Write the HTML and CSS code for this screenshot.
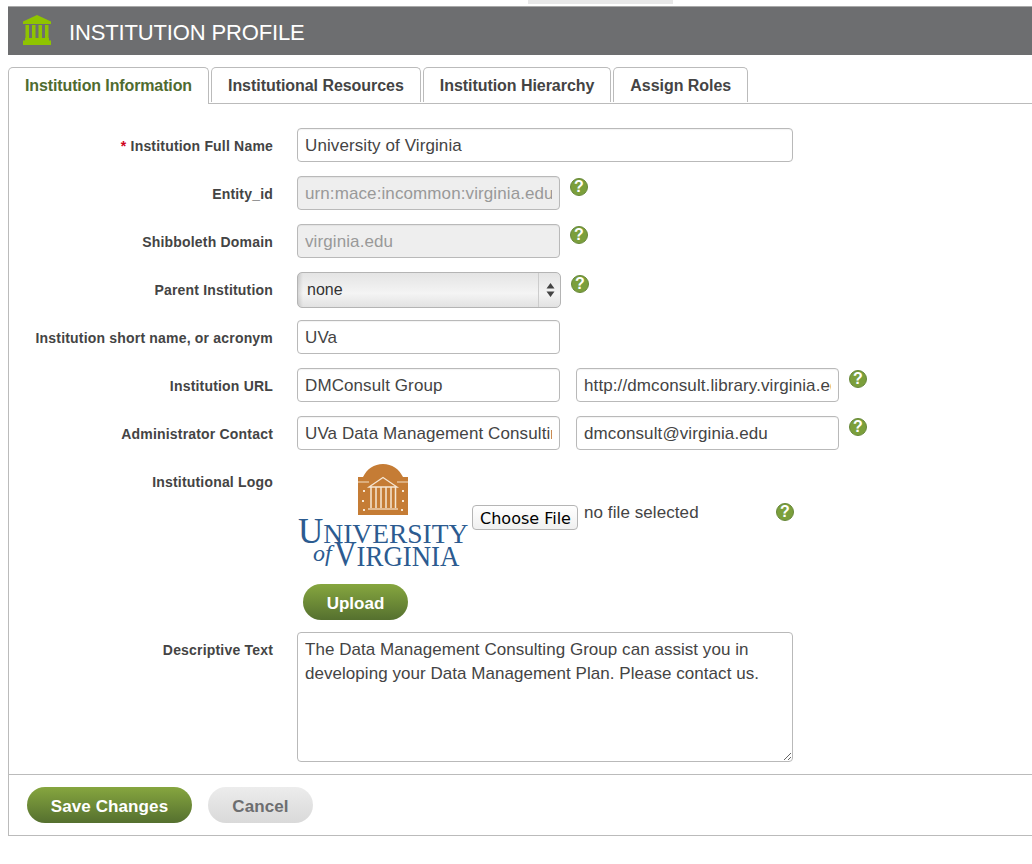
FILE: index.html
```html
<!DOCTYPE html>
<html lang="en">
<head>
<meta charset="utf-8">
<title>Institution Profile</title>
<link rel="stylesheet" href="styles.css">
</head>
<body>
<div class="top-strip"></div>
<header class="page-header">
  <svg class="header-icon" viewBox="0 0 30 30" aria-hidden="true">
    <path d="M15 0 L29 6.500 V9 H1 V6.500 Z" fill="#8fc400"/>
    <path d="M3.500 10 H7 V23 H3.500 Z M10 10 H13.500 V23 H10 Z M16.500 10 H20 V23 H16.500 Z M23 10 H26.500 V23 H23 Z" fill="#8fc400"/>
    <path d="M3 23 H27 V25.500 H3 Z M1 25.500 H29 V30 H1 Z" fill="#8fc400"/>
  </svg>
  <h1 class="page-title">INSTITUTION PROFILE</h1>
</header>

<nav class="tabs">
  <a class="tab tab-active">Institution Information</a>
  <a class="tab">Institutional Resources</a>
  <a class="tab">Institution Hierarchy</a>
  <a class="tab">Assign Roles</a>
</nav>

<main class="panel">
  <form class="form">
    <div class="row">
      <label class="label"><span class="req">*</span> Institution Full Name</label>
      <input class="field field-wide" value="University of Virginia">
    </div>
    <div class="row">
      <label class="label">Entity_id</label>
      <input class="field field-mid field-disabled" value="urn:mace:incommon:virginia.edu" readonly>
      <span class="help">?</span>
    </div>
    <div class="row">
      <label class="label">Shibboleth Domain</label>
      <input class="field field-mid field-disabled" value="virginia.edu" readonly>
      <span class="help">?</span>
    </div>
    <div class="row">
      <label class="label">Parent Institution</label>
      <div class="select-wrap">
        <select class="select"><option>none</option></select>
        <svg class="select-arrows" viewBox="0 0 9 14" aria-hidden="true">
          <path d="M4.500 0 L8.500 5.500 H0.500 Z M0.500 8.500 H8.500 L4.500 14 Z" fill="#444"/>
        </svg>
      </div>
      <span class="help help-select">?</span>
    </div>
    <div class="row">
      <label class="label">Institution short name, or acronym</label>
      <input class="field field-mid" value="UVa">
    </div>
    <div class="row">
      <label class="label">Institution URL</label>
      <input class="field field-mid" value="DMConsult Group">
      <input class="field field-mid field-second" value="http://dmconsult.library.virginia.edu">
      <span class="help">?</span>
    </div>
    <div class="row">
      <label class="label">Administrator Contact</label>
      <input class="field field-mid" value="UVa Data Management Consulting Group">
      <input class="field field-mid field-second" value="dmconsult@virginia.edu">
      <span class="help">?</span>
    </div>
    <div class="row row-logo">
      <label class="label">Institutional Logo</label>
      <div class="logo-col">
        <div class="logo-line">
          <svg class="logo" viewBox="0 0 172 108" role="img" aria-label="University of Virginia">
            <g transform="translate(1 0)">
              <path d="M60 13 H65 C69 5 76 0 85 0 C94 0 101 5 105 13 H110 V51 H60 Z" fill="#c57c35"/>
              <path d="M60 18 H71 M99 18 H110" stroke="#f3dfc6" stroke-width="1"/>
              <path d="M71 23 L85 13.500 L99 23 Z" fill="none" stroke="#f6e6d2" stroke-width="1.300"/>
              <path d="M73 23 V44 M78 23 V44 M83 23 V44 M88 23 V44 M93 23 V44 M97.500 23 V44" stroke="#f6e6d2" stroke-width="1.500"/>
              <path d="M70 45 H100" stroke="#f6e6d2" stroke-width="1.200"/>
              <path d="M65 27 h2 M64 37 h2 M65 46 h2 M104 27 h2 M104 37 h2 M103 46 h2" stroke="#f6e6d2" stroke-width="2"/>
            </g>
            <text class="logo-text" x="1" y="79"><tspan class="logo-cap">U</tspan><tspan class="logo-small">NIVERSITY</tspan></text>
            <text class="logo-text logo-of" x="16" y="97">of</text>
            <text class="logo-text" transform="translate(37 102) scale(.894 1)"><tspan class="logo-cap">V</tspan><tspan class="logo-small2">IRGINIA</tspan></text>
          </svg>
          <button type="button" class="choose">Choose File</button>
          <span class="file-status">no file selected</span>
          <span class="help help-file">?</span>
        </div>
        <button type="button" class="btn btn-green btn-upload">Upload</button>
      </div>
    </div>
    <div class="row row-text">
      <label class="label">Descriptive Text</label>
      <textarea class="textarea">The Data Management Consulting Group can assist you in developing your Data Management Plan. Please contact us.</textarea>
    </div>
  </form>
  <footer class="actions">
    <button type="button" class="btn btn-green btn-save">Save Changes</button>
    <button type="button" class="btn btn-grey btn-cancel">Cancel</button>
  </footer>
</main>
</body>
</html>
```
FILE: styles.css
```css
* { box-sizing: border-box; }
html, body { overflow: hidden; }
body {
  margin: 0;
  padding: 6px 0 0 8px;
  width: 1032px;
  height: 864px;
  background: #fff;
  font-family: "Liberation Sans", Arial, sans-serif;
  color: #444;
}
.top-strip {
  position: absolute;
  left: 528px;
  top: 0;
  width: 145px;
  height: 4px;
  background: #e8e8e8;
}
.page-header {
  display: flex;
  align-items: center;
  height: 49px;
  padding-left: 14px;
  background: #6d6e70;
  border-top: 1px solid #a9a9a9;
}
.header-icon { width: 30px; height: 30px; flex: none; margin-top: -2px; }
.page-title {
  margin: 3px 0 0 17px;
  font-size: 22px;
  font-weight: normal;
  color: #fff;
  letter-spacing: -0.15px;
}
.tabs {
  display: flex;
  align-items: flex-start;
  gap: 2px;
  height: 37px;
  margin-top: 12px;
  border-bottom: 1px solid #bbb;
}
.tab {
  height: 35px;
  padding: 0 16px;
  border: 1px solid #bbb;
  border-bottom: 0;
  border-radius: 5px 5px 0 0;
  font-size: 16px;
  font-weight: bold;
  line-height: 36px;
  letter-spacing: -0.05px;
  color: #444;
}
.tab-active {
  height: 37px;
  letter-spacing: -0.12px;
  color: #4f6b2f;
  background: #fff;
}
.panel {
  height: 732px;
  border-left: 1px solid #bbb;
  border-bottom: 1px solid #bbb;
}
.form {
  height: 670px;
  padding-top: 24px;
  display: flex;
  flex-direction: column;
  gap: 14px;
}
.row {
  display: flex;
  align-items: flex-start;
  height: 34px;
}
.label {
  flex: none;
  width: 264px;
  margin-right: 24px;
  padding-top: 10px;
  text-align: right;
  font-size: 14px;
  font-weight: bold;
  line-height: 16px;
  letter-spacing: 0.19px;
  color: #444;
}
.req { color: #d0021b; }
.field {
  height: 34px;
  padding: 1px 7px 0;
  border: 1px solid #b9b9b9;
  border-radius: 4px;
  background: #fff;
  font-family: "Liberation Sans", Arial, sans-serif;
  font-size: 17px;
  letter-spacing: 0.1px;
  color: #444;
  outline: none;
  box-shadow: inset 0 1px 1px rgba(0, 0, 0, .05);
}
.field-wide { width: 496px; }
.field-mid { width: 263px; }
.field-second { margin-left: 16px; }
.field-disabled { background: #eee; color: #999; }
.help {
  flex: none;
  width: 18px;
  height: 18px;
  margin: 2px 0 0 10px;
  border-radius: 50%;
  background: #7b9f3b;
  border: 1px solid #67883a;
  color: #fff;
  font-size: 16px;
  font-weight: bold;
  line-height: 16px;
  text-align: center;
}
.help-select { margin-top: 3px; }
.select-wrap {
  position: relative;
  flex: none;
  width: 264px;
  height: 36px;
}
.select {
  appearance: none;
  width: 100%;
  height: 100%;
  padding: 0 9px 2px;
  border: 1px solid #b4b4b4;
  border-radius: 5px;
  background: linear-gradient(90deg, rgba(0,0,0,.12), rgba(0,0,0,0) 5px),
              linear-gradient(#e4e4e4, #f4f4f4 60%, #e2e2e2);
  font-family: "Liberation Sans", Arial, sans-serif;
  font-size: 16px;
  color: #333;
}
.select-arrows {
  position: absolute;
  right: 6px;
  top: 11px;
  width: 9px;
  height: 14px;
}
.select-wrap::after {
  content: "";
  position: absolute;
  right: 22px;
  top: 1px;
  bottom: 1px;
  width: 1px;
  background: #ccc;
}
.row-logo { height: 154px; }
.logo-col { display: flex; flex-direction: column; align-items: flex-start; }
.logo-line { display: flex; align-items: flex-start; }
.logo { width: 172px; height: 108px; flex: none; margin-right: 3px; }
.logo-text { font-family: "Liberation Serif", "Times New Roman", serif; fill: #2c5b90; }
.logo-cap { font-size: 35px; }
.logo-small { font-size: 27.500px; }
.logo-small2 { font-size: 30px; }
.logo-of { font-style: italic; font-size: 24px; }
.choose {
  flex: none;
  width: 106px;
  height: 25px;
  margin-top: 41px;
  padding: 2px 0 0 1px;
  border: 1px solid #b5b5b5;
  border-radius: 4px;
  background: linear-gradient(#fff, #f0f0f0);
  font-family: "DejaVu Sans", sans-serif;
  font-size: 16px;
  color: #000;
}
.file-status {
  flex: none;
  width: 192px;
  margin: 39px 0 0 6px;
  font-size: 17px;
  line-height: 20px;
  letter-spacing: 0.08px;
  color: #444;
}
.help-file { margin: 39px 0 0 0; }
.btn {
  height: 36px;
  border: 0;
  border-radius: 18px;
  font-family: "Liberation Sans", Arial, sans-serif;
  font-size: 17px;
  font-weight: bold;
  padding: 4px 0 0;
}
.btn-green {
  color: #fff;
  background: linear-gradient(#86a63f, #55702f);
}
.btn-grey {
  color: #6d6e70;
  background: linear-gradient(#ececec, #d9d9d9);
}
.btn-upload { width: 105px; margin: 12px 0 0 6px; }
.row-text { height: 130px; }
.textarea {
  flex: none;
  width: 496px;
  height: 130px;
  padding: 5px 7px;
  border: 1px solid #b9b9b9;
  border-radius: 4px;
  font-family: "Liberation Sans", Arial, sans-serif;
  font-size: 17px;
  letter-spacing: 0.04px;
  line-height: 24px;
  color: #444;
  outline: none;
}
.actions {
  display: flex;
  gap: 16px;
  padding: 12px 18px;
  border-top: 1px solid #bbb;
}
.btn-save { width: 165px; letter-spacing: 0.1px; }
.btn-cancel { width: 105px; letter-spacing: 0.1px; }
```
